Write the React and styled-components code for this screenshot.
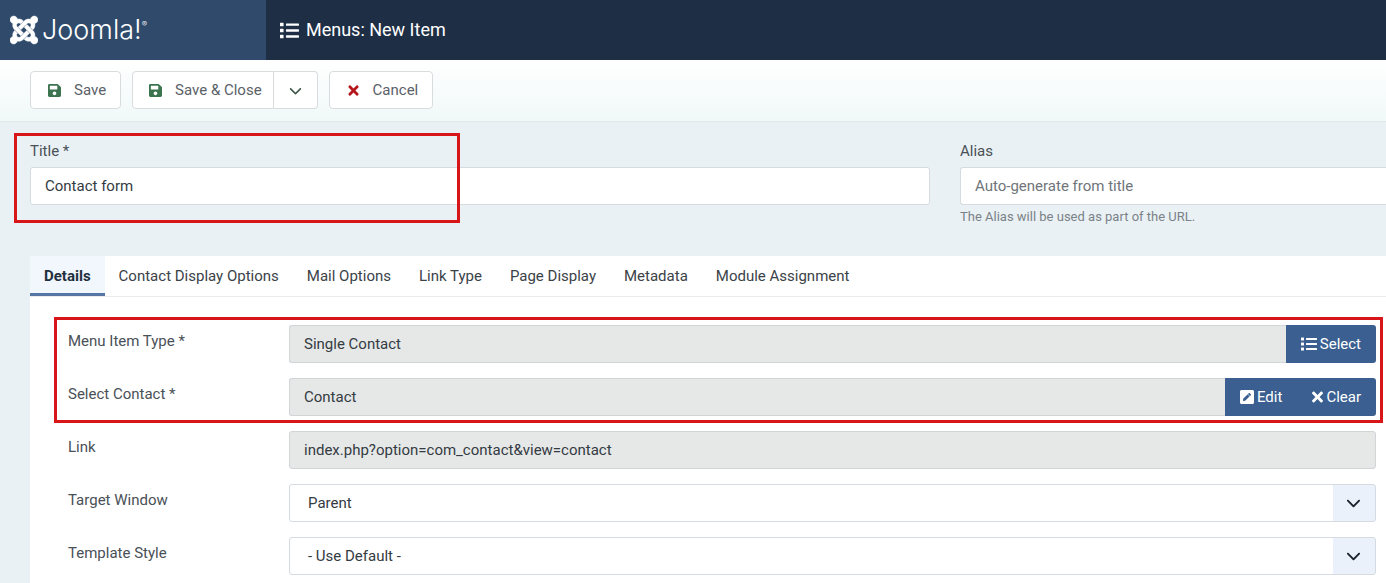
import React, { useState } from 'react';
import styled, { createGlobalStyle, css } from 'styled-components';
import { FaJoomla, FaList, FaSave, FaTimes, FaPenSquare } from 'react-icons/fa';
import { FaChevronDown } from 'react-icons/fa6';

const GlobalStyle = createGlobalStyle`
  * {
    box-sizing: border-box;
  }

  body {
    margin: 0;
    overflow-x: hidden;
    background-color: #eaf1f4;
    color: #495057;
    font-family: Roboto, sans-serif;
    font-size: 15px;
    line-height: 20px;
  }

  button, input, select {
    font: inherit;
    color: inherit;
  }
`;

const Header = styled.header`
  display: flex;
  height: 60px;
  color: #fff;
  background-color: #1e2f45;
`;

const Brand = styled.a`
  display: flex;
  align-items: center;
  gap: 4px;
  width: 266px;
  padding-left: 10px;
  color: #fff;
  background-color: #2f4a6b;
  text-decoration: none;

  svg {
    width: 28px;
    height: 32px;
    stroke: #fff;
    stroke-width: 7px;
  }
`;

const BrandName = styled.span`
  font-family: Inter, sans-serif;
  font-weight: 300;
  font-size: 27px;
`;

const Registered = styled.sup`
  font-size: 8px;
  line-height: 8px;
  vertical-align: 12px;
`;

const PageTitle = styled.h1`
  display: flex;
  align-items: center;
  gap: 7px;
  margin: 0;
  padding-left: 14px;
  font-size: 18px;
  font-weight: 400;
`;

const Toolbar = styled.div`
  display: flex;
  gap: 11px;
  height: 62px;
  padding: 11px 30px;
  background: linear-gradient(#fff, #f0f8f8);
  border-bottom: 1px solid #dfe8e9;
`;

const ButtonGroup = styled.div`
  display: flex;
`;

const ToolbarButton = styled.button`
  display: flex;
  align-items: center;
  gap: 13px;
  height: 38px;
  padding: 0 14px 0 17px;
  color: #5b6168;
  background-color: #fff;
  border: 1px solid #d8dcdf;
  border-radius: 4px;

  svg {
    width: 13px;
    height: 15px;
    color: ${({ $iconColor }) => $iconColor || '#3c7450'};
  }

  ${ButtonGroup} &:first-child {
    padding: 0 11px 0 16px;
    border-radius: 4px 0 0 4px;
  }

  ${ButtonGroup} &:last-child {
    padding: 0 15px;
    border-left: 0;
    border-radius: 0 4px 4px 0;
  }
`;

const TitleRow = styled.div`
  display: grid;
  grid-template-columns: 900fr 426fr;
  gap: 30px;
  padding: 19px 0 29px 30px;
`;

const FormGroup = styled.div`
  position: relative;
  display: flex;
  flex-direction: column;
`;

const TopLabel = styled.label`
  margin-bottom: 6px;
`;

const Help = styled.small`
  margin-top: 2px;
  font-size: 13px;
  color: #7a8288;
`;

const fieldStyle = css`
  flex: 1;
  min-width: 0;
  height: 38px;
  padding: 0 14px;
  color: #343b42;
  background-color: #fff;
  border: 1px solid #d5dbe0;
  border-radius: 3px;
`;

const TextInput = styled.input`
  ${fieldStyle}
  flex: none;

  &::placeholder {
    color: #6f757b;
    opacity: 1;
  }

  ${({ $bleed }) => $bleed && css`
    border-right: 0;
    border-radius: 3px 0 0 3px;
  `}
`;

const ReadOnlyInput = styled.input`
  ${fieldStyle}
  background-color: #e6e8e8;
  border-color: #d0d5d8;

  &:not(:last-child) {
    border-right: 0;
    border-radius: 3px 0 0 3px;
  }
`;

const Panel = styled.section`
  margin-left: 30px;
  background-color: #fff;
`;

const TabList = styled.div`
  display: flex;
  height: 41px;
  border-bottom: 1px solid #e8ecef;
`;

const Tab = styled.button`
  padding: 0 14px;
  color: #3b4248;
  background-color: transparent;
  border: 0;

  ${({ $active }) => $active && css`
    color: #22303f;
    font-weight: 700;
    background-color: #f2f6fd;
    border-bottom: 3px solid #5576a5;
    padding-top: 3px;
  `}
`;

const Fields = styled.div`
  display: flex;
  flex-direction: column;
  gap: 15px;
  padding: 28px 10px 8px 38px;
`;

const RequiredFields = styled.div`
  position: relative;
  display: flex;
  flex-direction: column;
  gap: 15px;
`;

const Row = styled.div`
  display: grid;
  grid-template-columns: 221px 1fr;
`;

const RowLabel = styled.label`
  padding-top: 6px;
`;

const Controls = styled.div`
  display: flex;
`;

const ActionButton = styled.button`
  display: flex;
  align-items: center;
  gap: 3px;
  height: 38px;
  padding: 0 15px;
  color: #fff;
  background-color: #3a5f90;
  border: 0;

  svg {
    width: ${({ $iconWidth }) => $iconWidth};
    height: 16px;
  }

  &:last-child {
    border-radius: 0 3px 3px 0;
  }
`;

const SelectWrap = styled.div`
  position: relative;
  display: flex;
  flex: 1;

  svg {
    position: absolute;
    top: 11px;
    right: 15px;
    color: #1c2228;
    pointer-events: none;
  }
`;

const Select = styled.select`
  ${fieldStyle}
  padding: 0 60px 0 18px;
  appearance: none;
  background-image: linear-gradient(#ebf1fb, #ebf1fb);
  background-position: right;
  background-repeat: no-repeat;
  background-size: 42px 100%;
`;

// red frame laid over the fields the reader has to fill in
const Highlight = styled.div`
  position: absolute;
  inset: ${({ $inset }) => $inset};
  border: 3px solid #d81518;
  pointer-events: none;
`;

const TitleHighlight = styled(Highlight)`
  width: 446px;
`;

const tabs = [
  'Details',
  'Contact Display Options',
  'Mail Options',
  'Link Type',
  'Page Display',
  'Metadata',
  'Module Assignment',
];

function SelectField({ id, label, option }) {
  return (
    <Row>
      <RowLabel htmlFor={id}>{label}</RowLabel>
      <SelectWrap>
        <Select id={id}>
          <option>{option}</option>
        </Select>
        <FaChevronDown size={15} />
      </SelectWrap>
    </Row>
  );
}

function ReadOnlyField({ id, label, value, children }) {
  return (
    <Row>
      <RowLabel htmlFor={id}>{label}</RowLabel>
      <Controls>
        <ReadOnlyInput id={id} value={value} readOnly />
        {children}
      </Controls>
    </Row>
  );
}

function App() {
  const [title, setTitle] = useState('Contact form');
  const [activeTab, setActiveTab] = useState('Details');

  return (
    <>
      <GlobalStyle />
      <Header>
        <Brand href="#">
          <FaJoomla />
          <BrandName>Joomla!<Registered>®</Registered></BrandName>
        </Brand>
        <PageTitle>
          <FaList size={19} />
          Menus: New Item
        </PageTitle>
      </Header>

      <Toolbar>
        <ToolbarButton type="button"><FaSave />Save</ToolbarButton>
        <ButtonGroup>
          <ToolbarButton type="button"><FaSave />Save &amp; Close</ToolbarButton>
          <ToolbarButton type="button" aria-label="More save options" $iconColor="#40594b">
            <FaChevronDown />
          </ToolbarButton>
        </ButtonGroup>
        <ToolbarButton type="button" $iconColor="#b5161b"><FaTimes />Cancel</ToolbarButton>
      </Toolbar>

      <main>
        <TitleRow>
          <FormGroup>
            <TopLabel htmlFor="title">Title *</TopLabel>
            <TextInput id="title" value={title} onChange={(e) => setTitle(e.target.value)} />
            <TitleHighlight $inset="-8px auto 4px -16px" />
          </FormGroup>
          <FormGroup>
            <TopLabel htmlFor="alias">Alias</TopLabel>
            <TextInput id="alias" placeholder="Auto-generate from title" $bleed />
            <Help>The Alias will be used as part of the URL.</Help>
          </FormGroup>
        </TitleRow>

        <Panel>
          <TabList role="tablist">
            {tabs.map((tab) => (
              <Tab
                key={tab}
                type="button"
                role="tab"
                aria-selected={tab === activeTab}
                $active={tab === activeTab}
                onClick={() => setActiveTab(tab)}
              >
                {tab}
              </Tab>
            ))}
          </TabList>

          <Fields>
            <RequiredFields>
              <ReadOnlyField id="type" label="Menu Item Type *" value="Single Contact">
                <ActionButton type="button" $iconWidth="16px"><FaList />Select</ActionButton>
              </ReadOnlyField>
              <ReadOnlyField id="contact" label="Select Contact *" value="Contact">
                <ActionButton type="button" $iconWidth="14px"><FaPenSquare />Edit</ActionButton>
                <ActionButton type="button" $iconWidth="11px"><FaTimes />Clear</ActionButton>
              </ReadOnlyField>
              <Highlight $inset="-8px -7px -7px -14px" />
            </RequiredFields>
            <ReadOnlyField id="link" label="Link" value="index.php?option=com_contact&view=contact" />
            <SelectField id="target" label="Target Window" option="Parent" />
            <SelectField id="template" label="Template Style" option="- Use Default -" />
          </Fields>
        </Panel>
      </main>
    </>
  );
}

export default App;
